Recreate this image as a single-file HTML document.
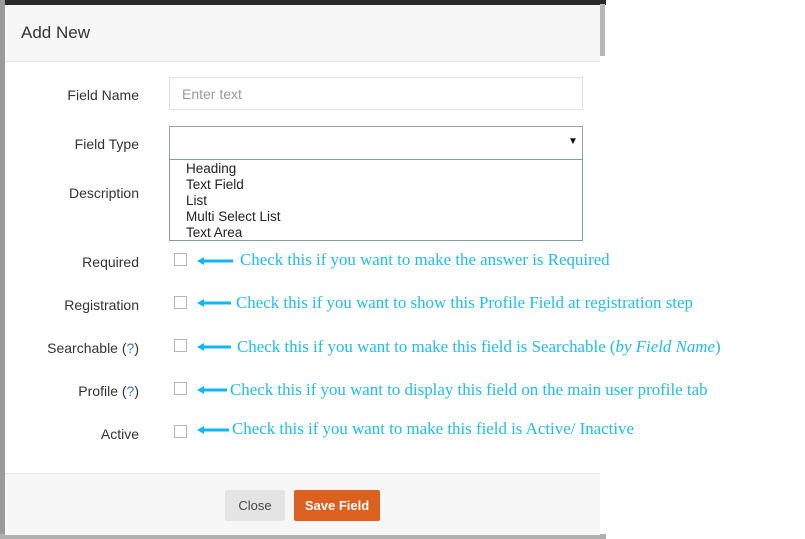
<!DOCTYPE html>
<html><head><style>
body{margin:0;width:805px;height:539px;background:#fff;position:relative;overflow:hidden;font-family:"Liberation Sans",sans-serif;}
.a{position:absolute}
.lbl{position:absolute;right:666px;font-size:14px;color:#333;white-space:nowrap}
.cb{position:absolute;left:174px;width:13px;height:13px;border:1px solid #b5b5b5;background:#fff;box-sizing:border-box}
.note{position:absolute;font-family:"Liberation Serif",serif;font-size:16.9px;color:#1ebdf0;white-space:nowrap}
.arr{position:absolute;left:195px}
</style></head><body>
<div class="a" style="left:0;top:0;width:606px;height:5px;background:#2a2a2a"></div>
<div class="a" style="left:0;top:0;width:5px;height:539px;background:#9a9a9a"></div>
<div class="a" style="left:0;top:534px;width:606px;height:5px;background:#b0b0b0"></div>
<div class="a" style="left:600px;top:4px;width:5px;height:52px;background:#b8b8b8"></div>
<div class="a" style="left:5px;top:5px;width:595px;height:56px;background:#f7f7f7;border-bottom:1px solid #e5e5e5"></div>
<div class="a" style="left:21px;top:23px;font-size:17px;color:#333">Add New</div>
<div class="a" style="left:5px;top:473px;width:595px;height:61px;background:#f7f7f7;border-top:1px solid #e5e5e5"></div>

<div class="lbl" style="top:87px">Field Name</div>
<div class="a" style="left:169px;top:77px;width:414px;height:33px;border:1px solid #e0e0e0;box-sizing:border-box;font-size:14px;color:#999;padding:8px 12px">Enter text</div>
<div class="lbl" style="top:136px">Field Type</div>
<div class="a" style="left:169px;top:126px;width:414px;height:34px;border:1px solid #a0a0a0;box-sizing:border-box"></div>
<div class="a" style="left:568px;top:136px;font-size:10px;color:#111">▼</div>
<div class="a" style="left:169px;top:159px;width:414px;height:82px;border:1px solid #7f9db9;box-sizing:border-box;font-size:13.5px;color:#222;line-height:16px;padding:1px 0 0 16px;background:#fff">Heading<br>Text Field<br>List<br>Multi Select List<br>Text Area</div>
<div class="lbl" style="top:185px">Description</div>

<div class="lbl" style="top:254px">Required</div>
<div class="lbl" style="top:297px">Registration</div>
<div class="lbl" style="top:340px">Searchable (<span style="color:#337ab7">?</span>)</div>
<div class="lbl" style="top:383px">Profile (<span style="color:#337ab7">?</span>)</div>
<div class="lbl" style="top:426px">Active</div>

<div class="cb" style="top:253px"></div>
<div class="cb" style="top:296px"></div>
<div class="cb" style="top:339px"></div>
<div class="cb" style="top:382px"></div>
<div class="cb" style="top:425px"></div>

<svg class="arr" style="top:255px" width="40" height="12"><path d="M2 6L9 2V4.5H38V7.5H9V10Z" fill="#12b6f0"/></svg>
<svg class="arr" style="top:297px" width="40" height="12"><path d="M2 6L9 2V4.5H36V7.5H9V10Z" fill="#12b6f0"/></svg>
<svg class="arr" style="top:341px" width="40" height="12"><path d="M2 6L9 2V4.5H36V7.5H9V10Z" fill="#12b6f0"/></svg>
<svg class="arr" style="top:384px" width="40" height="12"><path d="M2 6L9 2V4.5H32V7.5H9V10Z" fill="#12b6f0"/></svg>
<svg class="arr" style="top:424px" width="40" height="12"><path d="M2 6L9 2V4.5H34V7.5H9V10Z" fill="#12b6f0"/></svg>

<div class="note" style="left:240px;top:250px">Check this if you want to make the answer is Required</div>
<div class="note" style="left:236px;top:293px">Check this if you want to show this Profile Field at registration step</div>
<div class="note" style="left:237px;top:337px">Check this if you want to make this field is Searchable (<i>by Field Name</i>)</div>
<div class="note" style="left:230px;top:380px">Check this if you want to display this field on the main user profile tab</div>
<div class="note" style="left:232px;top:419px">Check this if you want to make this field is Active/ Inactive</div>

<div class="a" style="left:225px;top:490px;width:60px;height:31px;background:#e4e4e4;border-radius:2px;font-size:13px;color:#444;text-align:center;line-height:31px">Close</div>
<div class="a" style="left:294px;top:490px;width:86px;height:31px;background:#dc6020;border-radius:2px;font-size:13px;font-weight:bold;color:#fff;text-align:center;line-height:31px">Save Field</div>
</body></html>
